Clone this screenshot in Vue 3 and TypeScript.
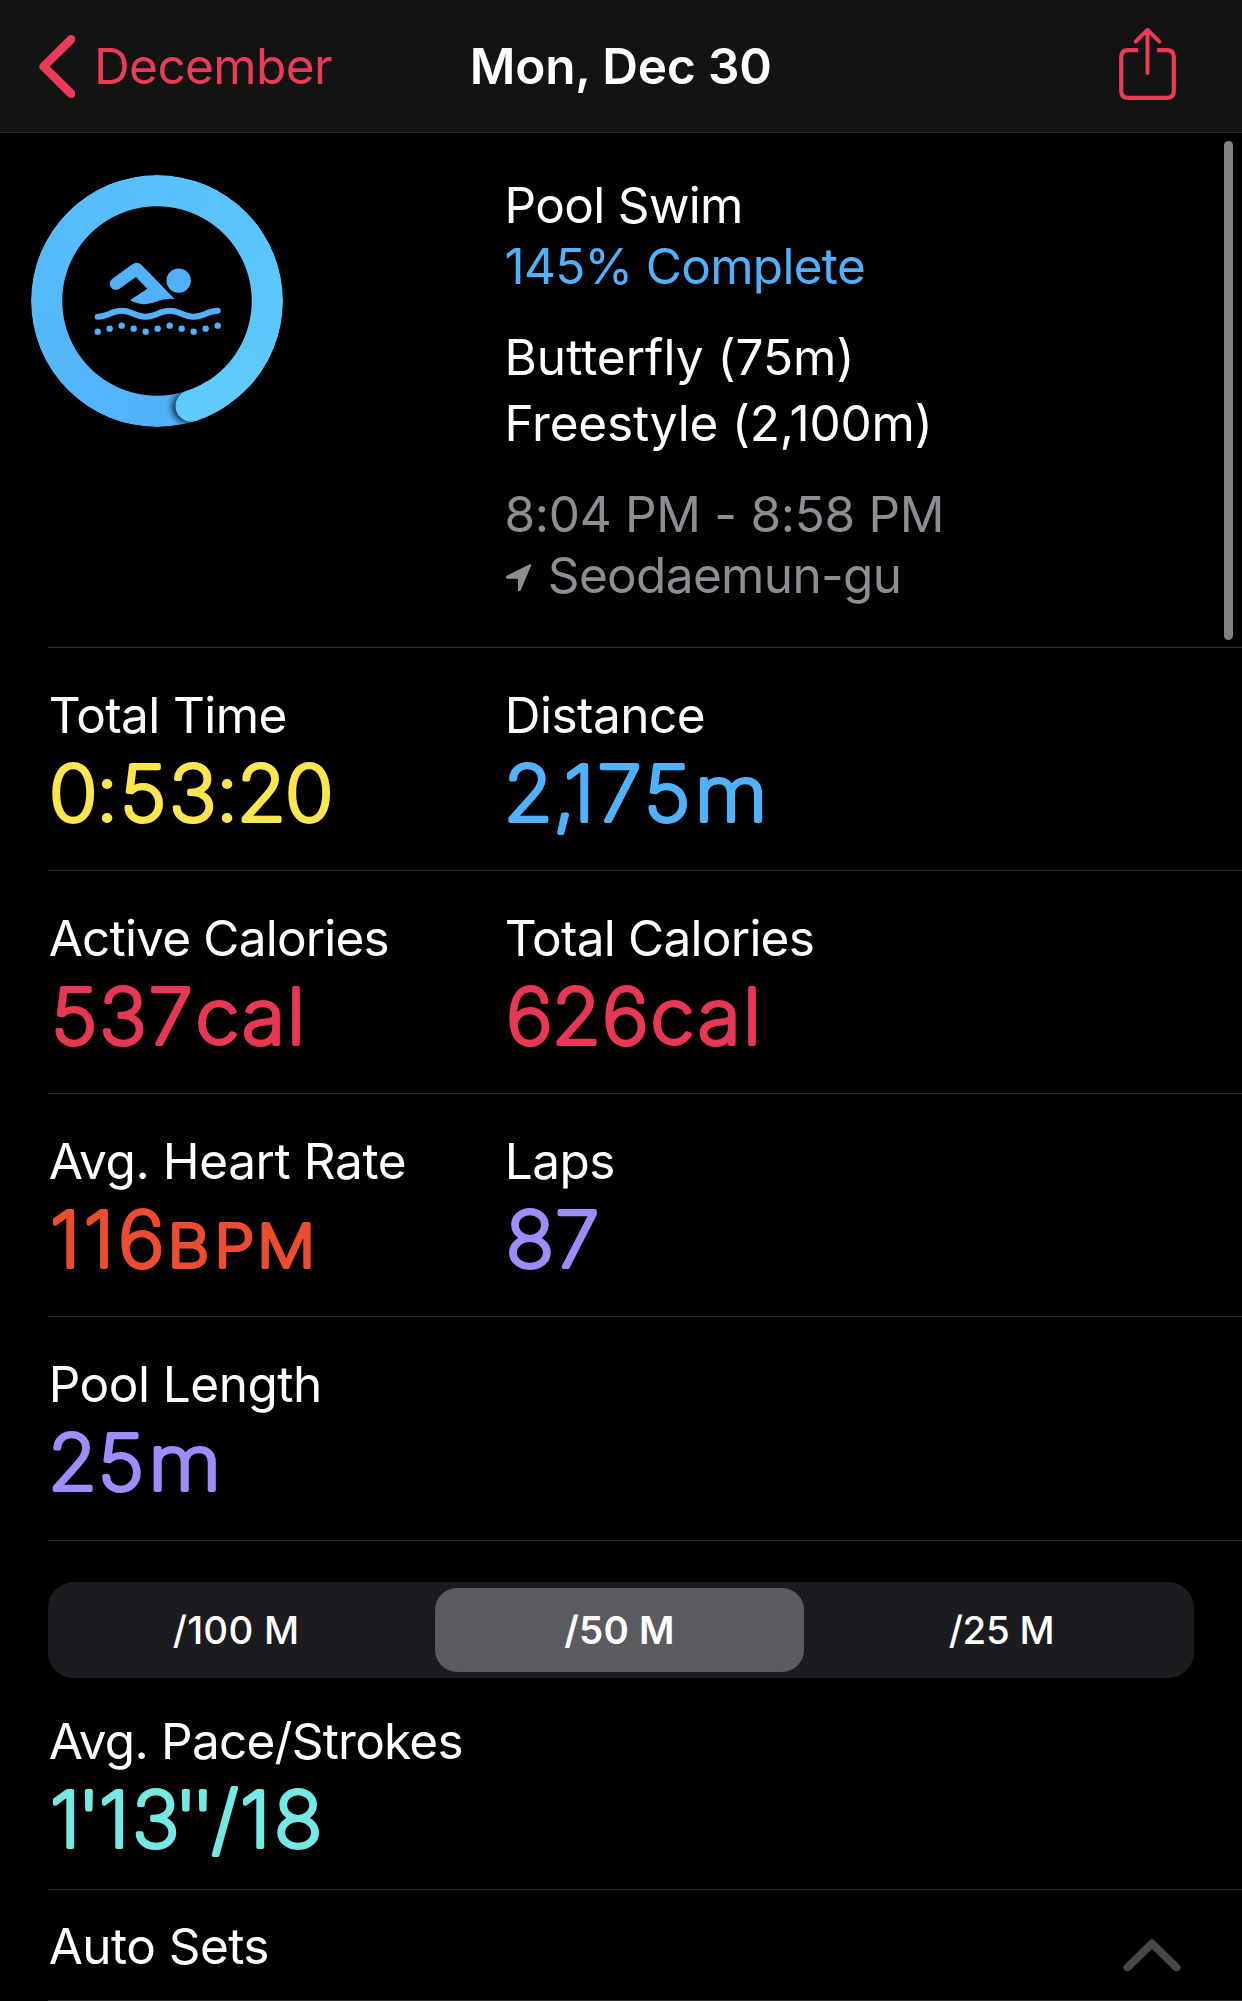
<script setup lang="ts">
interface Part {
  text: string
  /** left origin of each glyph, in px */
  x: number[]
  stretch?: number
  small?: boolean
}

interface Metric {
  label: string
  labelSpacing: number
  tone: string
  parts: Part[]
}

const DIGIT_STRETCH = 1.04

const rows: Metric[][] = [
  [
    {
      label: 'Total Time',
      labelSpacing: -0.61,
      tone: 'yellow',
      parts: [{ text: '0:53:20', x: [1.1, 47.9, 72, 121, 167.9, 188.7, 237.1] }],
    },
    {
      label: 'Distance',
      labelSpacing: -0.51,
      tone: 'blue',
      parts: [
        { text: '2,175', x: [-0.5, 49.2, 59.9, 93.3, 139.9] },
        { text: 'm', x: [190.4], stretch: 1.09 },
      ],
    },
  ],
  [
    {
      label: 'Active Calories',
      labelSpacing: -0.8,
      tone: 'pink',
      parts: [{ text: '537cal', x: [3, 51.2, 100.4, 147.4, 194, 238.9] }],
    },
    {
      label: 'Total Calories',
      labelSpacing: -0.75,
      tone: 'pink',
      parts: [{ text: '626cal', x: [2.1, 47.8, 97.9, 146.6, 193.8, 239] }],
    },
  ],
  [
    {
      label: 'Avg. Heart Rate',
      labelSpacing: -0.41,
      tone: 'orange',
      parts: [
        { text: '116', x: [1.9, 35.7, 69.9] },
        { text: 'BPM', x: [119.4, 166.2, 209.1], stretch: 1.1, small: true },
      ],
    },
    { label: 'Laps', labelSpacing: -0.53, tone: 'purple', parts: [{ text: '87', x: [1.7, 51.1] }] },
  ],
  [
    {
      label: 'Pool Length',
      labelSpacing: -0.5,
      tone: 'purple',
      parts: [
        { text: '25', x: [-0.3, 49.8] },
        { text: 'm', x: [100.3], stretch: 1.09 },
      ],
    },
  ],
]

const pace: Metric = {
  label: 'Avg. Pace/Strokes',
  labelSpacing: -0.76,
  tone: 'teal',
  parts: [{ text: "1'13''/18", x: [1.9, 29.5, 50.9, 83.9, 126.5, 143.4, 163.4, 191.9, 226.1] }],
}

const segments = [
  { text: '/100 M', active: false, spacing: 0.2 },
  { text: '/50 M', active: true, spacing: 0.2 },
  { text: '/25 M', active: false, spacing: -0.3 },
]

const bubbles = [516, 507, 498, 507, 516, 507, 498, 507, 516, 507, 498]

const stretchOf = (p: Part) => p.stretch ?? DIGIT_STRETCH
const glyphX = (p: Part) => p.x.map((v) => (v / stretchOf(p)).toFixed(2)).join(' ')
</script>

<template>
  <main class="screen">
    <header class="nav">
      <a class="back">
        <svg class="back-icon" viewBox="116 105 109 189">
          <path d="M212 118 129.500 199.500 212 281" />
        </svg>
        <span class="back-label">December</span>
      </a>
      <h1 class="title">Mon, Dec 30</h1>
      <svg class="share" viewBox="111 84 171 216">
        <path class="box" d="M168 150.500H139Q117.500 150.500 117.500 172V272Q117.500 293.500 139 293.500H254Q275.500 293.500 275.500 272V172Q275.500 150.500 254 150.500H225" />
        <path class="arrow" d="M196.500 219V91M161 125 196.500 89.500 232 125" />
      </svg>
    </header>

    <section class="summary">
      <div class="ring">
        <div class="ring-track"></div>
        <svg class="ring-art" viewBox="34 46 756 756">
          <defs>
            <clipPath id="band">
              <path clip-rule="evenodd" d="M34 424a378 378 0 1 0 756 0a378 378 0 1 0 -756 0ZM128 424a284 284 0 1 0 568 0a284 284 0 1 0 -568 0Z" />
            </clipPath>
            <filter id="soft" x="-60%" y="-60%" width="220%" height="220%">
              <feGaussianBlur stdDeviation="9" />
            </filter>
          </defs>
          <g clip-path="url(#band)">
            <circle cx="505" cy="742" r="47" fill="#04121c" opacity="0.85" filter="url(#soft)" />
            <path d="M513 739.500A331 331 0 0 0 590 703" fill="none" stroke="#5ecbfa" stroke-width="96" />
          </g>
          <circle cx="514.500" cy="739" r="47" fill="#5ecbfa" />
          <g fill="#51b2fb">
            <circle cx="477" cy="363" r="36.500" />
            <path d="M278 357 338 314Q352 304 365 315L465 418Q438 414 413 425Q374 444 331 422L383 387 349 352 299 387A18 18 0 0 1 278 357Z" />
            <circle v-for="(y, i) in bubbles" :key="i" :cx="234 + i * 36" :cy="y" r="9.500" />
          </g>
          <path class="wave" d="M234 471C262 471 278 453 306 453S350 471 378 471 422 453 450 453 494 471 522 471 566 453 594 453" />
        </svg>
      </div>
      <div class="info">
        <div class="block first">
          <p style="letter-spacing: -0.66px">Pool Swim</p>
          <p class="blue" style="letter-spacing: -0.7px">145% Complete</p>
        </div>
        <div class="block loose">
          <p>Butterfly (75m)</p>
          <p style="letter-spacing: -0.2px">Freestyle (2,100m)</p>
        </div>
        <div class="block dim">
          <p style="letter-spacing: -0.3px">8:04 PM - 8:58 PM</p>
          <p class="place" style="letter-spacing: -0.66px">
            <svg class="pin" viewBox="48 281 76 83"><path d="M121 281Q125 281 123.500 286L92 360Q90 364 87 363 84 363 84 359V328Q84 325 81 325H51Q47 324 48 320 48 317 52 315Z" /></svg>
            <span>Seodaemun-gu</span>
          </p>
        </div>
      </div>
    </section>

    <section v-for="(row, r) in rows" :key="r" class="row">
      <div v-for="m in row" :key="m.label" class="metric">
        <p :style="{ letterSpacing: m.labelSpacing + 'px' }">{{ m.label }}</p>
        <svg class="value" :class="m.tone">
          <text
            v-for="p in m.parts"
            :key="p.text"
            :x="glyphX(p)"
            y="76"
            :transform="`scale(${stretchOf(p)} 1)`"
            :class="{ small: p.small }"
          >{{ p.text }}</text>
        </svg>
      </div>
    </section>

    <section class="pace">
      <div class="segmented">
        <button
          v-for="s in segments"
          :key="s.text"
          :class="{ active: s.active }"
          :style="{ letterSpacing: s.spacing + 'px' }"
        >{{ s.text }}</button>
      </div>
      <div class="metric">
        <p :style="{ letterSpacing: pace.labelSpacing + 'px' }">{{ pace.label }}</p>
        <svg class="value" :class="pace.tone">
          <text
            v-for="p in pace.parts"
            :key="p.text"
            :x="glyphX(p)"
            y="76"
            :transform="`scale(${stretchOf(p)} 1)`"
          >{{ p.text }}</text>
        </svg>
      </div>
    </section>

    <section class="sets">
      <p style="letter-spacing: -0.55px">Auto Sets</p>
      <svg class="collapse" viewBox="0 0 58 34"><path d="M4.500 29.500 29 5.500 53.500 29.500" /></svg>
    </section>

    <div class="scrollbar"></div>
  </main>
</template>

<style>
body {
  background: #000;
}
</style>

<style scoped>
.screen {
  position: relative;
  box-sizing: border-box;
  width: 1242px;
  height: 2001px;
  overflow: hidden;
  background: #000;
  color: #fff;
  font-family: Inter, "Liberation Sans", sans-serif;
  font-size: 49.5px;
  line-height: 60px;
  white-space: nowrap;
}

p,
h1 {
  margin: 0;
  font-size: inherit;
}

.nav {
  box-sizing: border-box;
  display: grid;
  grid-template-columns: 1fr auto 1fr;
  align-items: center;
  height: 133px;
  padding: 0 66px 0 38.5px;
  background: #131313;
  border-bottom: 1px solid #29292a;
}

.back {
  display: flex;
  align-items: center;
  gap: 19px;
  color: #ec3a59;
  letter-spacing: -0.6px;
}

.back-icon {
  width: 36.5px;
  height: 63px;
  fill: none;
  stroke: currentColor;
  stroke-width: 26;
  stroke-linecap: round;
  stroke-linejoin: round;
}

.title {
  margin-left: 27px;
  font-weight: 600;
  letter-spacing: -0.15px;
}

.share {
  justify-self: end;
  width: 57px;
  height: 72px;
  margin-top: -4px;
  overflow: visible;
  fill: none;
  stroke: #ec3a59;
}

.share .box {
  stroke-width: 12.5;
}

.share .arrow {
  stroke-width: 12;
  stroke-linecap: round;
  stroke-linejoin: round;
}

.summary {
  box-sizing: border-box;
  display: flex;
  height: 514px;
  padding: 42px 0 0 31.3px;
}

.ring {
  position: relative;
  width: 252px;
  height: 252px;
  margin: 0.4px 221.2px 0 0;
}

.ring-track {
  width: 252px;
  height: 252px;
  border-radius: 50%;
  background: conic-gradient(from 162deg, #50b0fa 0deg, #53b6fa 60deg, #58bffb 180deg, #5bc6fb 270deg, #5ecbfa 345deg, #5ecbfa 360deg);
  mask: radial-gradient(circle, transparent 94.2px, #000 95.2px);
}

.ring-art {
  position: absolute;
  inset: 0;
  width: 252px;
  height: 252px;
}

.wave {
  fill: none;
  stroke: #51b2fb;
  stroke-width: 18;
  stroke-linecap: round;
}

.block {
  margin-bottom: 28px;
  line-height: 61px;
}

.first {
  margin-bottom: 27px;
}

.loose {
  line-height: 66px;
}

.dim {
  color: #8e8d93;
}

.place {
  display: flex;
  align-items: center;
}

.pin {
  width: 25.3px;
  height: 27.6px;
  margin: 4px 16.5px 0 1.5px;
  fill: currentColor;
}

.row {
  box-sizing: border-box;
  display: flex;
  height: 223px;
  margin-left: 48px;
  padding-top: 37px;
  border-top: 1px solid #2f2f31;
}

.row:nth-of-type(5) {
  height: 224px;
}

.metric {
  width: 456px;
}

.metric p,
.sets p {
  padding-left: 0.7px;
}

.value {
  display: block;
  width: 456px;
  height: 90px;
  overflow: visible;
  font-size: 77px;
  font-weight: 200;
  fill: currentColor;
  stroke: currentColor;
  stroke-width: 4px;
  stroke-linejoin: round;
}

.value .small {
  font-size: 59px;
}

.yellow { color: #fbe64f; }
.blue { color: #51b2fb; }
.pink { color: #e83755; }
.orange { color: #ed4c2f; }
.purple { color: #9f8bf9; }
.teal { color: #76e8e4; }

.pace {
  box-sizing: border-box;
  height: 349px;
  margin-left: 48px;
  padding-top: 41px;
  border-top: 1px solid #2f2f31;
}

.segmented {
  box-sizing: border-box;
  display: grid;
  grid-template-columns: 381px 369px 1fr;
  width: 1146px;
  height: 96px;
  margin-bottom: 33px;
  padding: 6px;
  border-radius: 26px;
  background: #1c1b20;
}

.segmented button {
  padding: 0;
  border: 0;
  border-radius: 22px;
  background: none;
  color: #fff;
  font: 450 38.5px Inter, "Liberation Sans", sans-serif;
}

.segmented button:first-child {
  padding-right: 17px;
}

.segmented button:last-child {
  padding-left: 11px;
}

.segmented .active {
  background: #5b5a60;
  font-weight: 570;
}

.sets {
  box-sizing: border-box;
  display: flex;
  justify-content: space-between;
  height: 112px;
  margin-left: 48px;
  padding: 26px 61px 0 0;
  border-top: 1px solid #2f2f31;
  border-bottom: 1px solid #2f2f31;
}

.collapse {
  width: 58px;
  height: 34px;
  margin-top: 22px;
  fill: none;
  stroke: #48484b;
  stroke-width: 8;
  stroke-linecap: round;
  stroke-linejoin: round;
}

.scrollbar {
  position: absolute;
  top: 141px;
  right: 9px;
  width: 9px;
  height: 499px;
  border-radius: 5px;
  background: #828282;
}
</style>
